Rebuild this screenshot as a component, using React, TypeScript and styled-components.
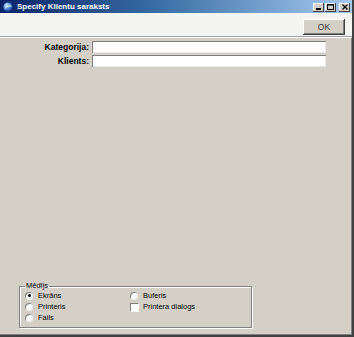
import React from "react";
import styled, { createGlobalStyle } from "styled-components";

const GlobalStyle = createGlobalStyle`
  html, body {
    margin: 0;
    padding: 0;
    background: #404040;
  }
  body {
    font-family: "Liberation Sans", Arial, sans-serif;
  }
`;

const Window = styled.div`
  width: 352px;
  height: 335px;
  display: flex;
  flex-direction: column;
  background: #d4d0c8;
  border-right: 2px solid #404040;
  border-bottom: 2px solid #404040;
  box-shadow: inset -1px -1px 0 #808080;
`;

const TitleBar = styled.div`
  height: 13px;
  flex: none;
  display: flex;
  align-items: center;
  padding: 0 2px 0 3px;
  background: linear-gradient(to right, #0a246a 0%, #3a6ea5 45%, #a6caf0 100%);
`;

const Title = styled.span`
  flex: 1;
  margin-left: 4px;
  color: #fff;
  font-weight: bold;
  font-size: 8px;
  white-space: nowrap;
`;

const CaptionButtons = styled.div`
  display: flex;
  gap: 1px;
  margin-top: 1px;
`;

const CaptionButton = styled.div<{ $gapLeft?: boolean }>`
  width: 11px;
  height: 9px;
  margin-left: ${(p) => (p.$gapLeft ? "2px" : "0")};
  background: #d4d0c8;
  box-shadow: inset -1px -1px 0 #404040, inset 1px 1px 0 #fff;
  display: flex;
  align-items: center;
  justify-content: center;
`;

const Toolbar = styled.div`
  height: 23px;
  flex: none;
  display: flex;
  align-items: center;
  justify-content: flex-end;
  padding-right: 7px;
  background: #f4f4f2;
  border-bottom: 1px solid #a0a0a0;
  box-shadow: 0 1px 0 #fff;
`;

const PushButton = styled.button`
  width: 42px;
  height: 16px;
  margin-top: 4px;
  padding: 0;
  border: none;
  background: #d4d0c8;
  box-shadow: inset -1px -1px 0 #404040, inset 1px 1px 0 #fff, inset -2px -2px 0 #808080;
  font-family: "Liberation Sans Narrow", "Liberation Sans", sans-serif;
  font-size: 8.5px;
  color: #333;
`;

const Body = styled.div`
  flex: 1;
  display: flex;
  flex-direction: column;
  justify-content: space-between;
  padding: 4px 0 7px 0;
`;

const Form = styled.div`
  display: grid;
  grid-template-columns: 89px 234px;
  column-gap: 3px;
  row-gap: 2px;
  align-items: center;
`;

const Label = styled.label`
  text-align: right;
  font-weight: bold;
  font-size: 8.5px;
  color: #000;
  white-space: nowrap;
`;

const TextInput = styled.div`
  height: 12px;
  background: #fff;
  box-shadow: inset 1px 1px 0 #808080, inset -1px -1px 0 #e8e8e8;
  border: none;
`;

const Group = styled.fieldset`
  margin: 0 0 0 19px;
  width: 233px;
  height: 46px;
  box-sizing: border-box;
  padding: 0 0 0 5px;
  border: 1px solid #808080;
  box-shadow: inset 1px 1px 0 #fff, 1px 1px 0 #fff;
  display: grid;
  grid-template-columns: 105px auto;
  grid-auto-rows: 11px;
  align-content: start;
`;

const Legend = styled.legend`
  padding: 0 1px;
  margin-left: 0;
  font-size: 7.5px;
  line-height: 8px;
  color: #000;
`;

const Option = styled.div`
  display: flex;
  align-items: center;
  gap: 5px;
  font-size: 7.5px;
  color: #000;
  white-space: nowrap;
`;

const Radio = styled.span<{ $checked?: boolean }>`
  width: 8px;
  height: 8px;
  border-radius: 50%;
  background: #fff;
  box-shadow: inset 1px 1px 0 #808080, inset -1px -1px 0 #e8e8e8;
  display: flex;
  align-items: center;
  justify-content: center;
  &::after {
    content: "";
    width: 3px;
    height: 3px;
    border-radius: 50%;
    background: ${(p) => (p.$checked ? "#000" : "transparent")};
  }
`;

const Check = styled.span`
  width: 8px;
  height: 8px;
  background: #fff;
  box-shadow: inset 1px 1px 0 #808080, 1px 1px 0 #fff;
`;

const AppIcon = () => (
  <svg width="10" height="10" viewBox="0 0 10 10">
    <defs>
      <radialGradient id="g" cx="35%" cy="30%" r="70%">
        <stop offset="0%" stopColor="#cfe6ff" />
        <stop offset="60%" stopColor="#4a8ad8" />
        <stop offset="100%" stopColor="#1a3f8a" />
      </radialGradient>
    </defs>
    <circle cx="5" cy="5" r="4.6" fill="url(#g)" />
    <path d="M2 6.5 C3.5 4 6 3.5 8.5 4.2" stroke="#fff" strokeWidth="1" fill="none" opacity="0.8" />
  </svg>
);

export default function App() {
  return (
    <>
      <GlobalStyle />
      <Window>
        <TitleBar>
          <AppIcon />
          <Title>Specify Klientu saraksts</Title>
          <CaptionButtons>
            <CaptionButton>
              <svg width="6" height="6" viewBox="0 0 6 6">
                <rect x="0" y="4" width="5" height="2" fill="#000" />
              </svg>
            </CaptionButton>
            <CaptionButton>
              <svg width="7" height="6" viewBox="0 0 7 6">
                <rect x="0.5" y="0.5" width="6" height="5" fill="none" stroke="#000" />
                <rect x="0" y="0" width="7" height="1.5" fill="#000" />
              </svg>
            </CaptionButton>
            <CaptionButton $gapLeft>
              <svg width="6" height="6" viewBox="0 0 6 6">
                <path d="M0.5 0.5 L5.5 5.5 M5.5 0.5 L0.5 5.5" stroke="#000" strokeWidth="1.3" />
              </svg>
            </CaptionButton>
          </CaptionButtons>
        </TitleBar>
        <Toolbar>
          <PushButton>OK</PushButton>
        </Toolbar>
        <Body>
          <Form>
            <Label>Kategorija:</Label>
            <TextInput />
            <Label>Klients:</Label>
            <TextInput />
          </Form>
          <Group>
            <Legend>Mēdījs</Legend>
            <Option>
              <Radio $checked />
              Ekrāns
            </Option>
            <Option>
              <Radio />
              Buferis
            </Option>
            <Option>
              <Radio />
              Printeris
            </Option>
            <Option>
              <Check />
              Printera dialogs
            </Option>
            <Option>
              <Radio />
              Fails
            </Option>
          </Group>
        </Body>
      </Window>
    </>
  );
}
